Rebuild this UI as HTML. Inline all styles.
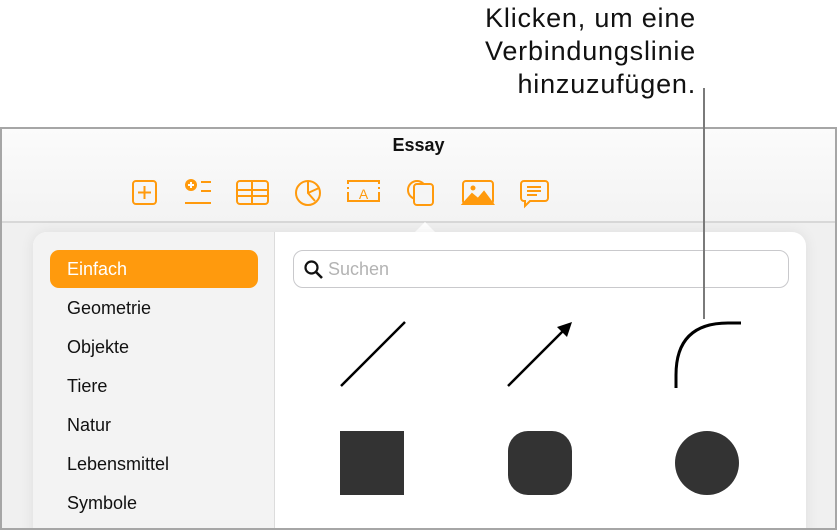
<!DOCTYPE html>
<html><head><meta charset="utf-8">
<style>
*{margin:0;padding:0;box-sizing:border-box}
body{width:838px;height:531px;background:#fff;position:relative;overflow:hidden;font-family:"Liberation Sans",sans-serif}
.call{position:absolute;right:142px;top:2px;text-align:right;font-size:27px;line-height:33px;color:#111;letter-spacing:0.8px}
.win{position:absolute;left:0;top:127px;width:837px;height:403px;border:2px solid #a6a6a6;background:#f0f0f0;overflow:hidden}
.tb{position:absolute;left:0;top:0;right:0;height:94px;background:linear-gradient(#fbfbfb,#f3f3f3);border-bottom:2px solid #d8d8d8}
.title{position:absolute;top:6px;left:0;right:0;text-align:center;font-weight:bold;font-size:18px;color:#111}
.pop{position:absolute;left:31px;top:103px;width:773px;height:320px;background:#fff;border-radius:14px;box-shadow:0 0 14px rgba(0,0,0,0.08)}
.side{position:absolute;left:0;top:0;width:242px;height:100%;background:#f3f3f3;border-radius:14px 0 0 0;border-right:1px solid #dcdcdc}
.item{position:absolute;left:34px;font-size:18px;color:#111}
.sel{position:absolute;left:17px;top:18px;width:208px;height:38px;background:#ff9a0d;border-radius:9px;color:#fff;font-size:18px;padding-left:17px;line-height:39px}
.search{position:absolute;left:260px;top:18px;width:496px;height:38px;border:1px solid #c9c9cc;border-radius:10px;color:#b3b3b3;font-size:18px;line-height:37px;padding-left:34px}
.arrowup{position:absolute;left:412px;top:93px;width:0;height:0;border-left:11px solid transparent;border-right:11px solid transparent;border-bottom:11px solid #fff}
</style></head><body>
<div class="call">Klicken, um eine<br>Verbindungslinie<br>hinzuzufügen.</div>
<div class="win">
 <div class="tb">
  <div class="title">Essay</div>
  <svg style="position:absolute;left:0;top:0" width="837" height="94" fill="none" stroke="#ff9a0d" stroke-width="2">
   <rect x="131" y="52" width="23" height="23" rx="3"/><path d="M142.5 57v13M136 63.5h13"/>
   <circle cx="189" cy="56" r="6" fill="#ff9a0d" stroke="none"/><path d="M186 56h6M189 53v6" stroke="#fff"/><path d="M199 53h10M199 62h10M183 74h26"/>
   <rect x="235" y="52" width="31" height="23" rx="3"/><path d="M235 61h31M235 67h31M250 52v23"/>
   <circle cx="306" cy="64" r="12"/><path d="M306 52v12l7 8M306 64l11-5"/>
   <path d="M346 55v-3h31v3M346 60v-2M377 60v-2M346 63v9h31v-9" /><text x="361.5" y="70" font-size="14" fill="#ff9a0d" stroke="none" text-anchor="middle" font-family="Liberation Sans">A</text>
   <circle cx="415" cy="61" r="9"/><rect x="412" y="55" width="19" height="21" rx="3" fill="#f5f5f5"/>
   <rect x="461" y="52" width="30" height="23" rx="3"/><path d="M461 75l9-10 6 5 6-7 9 12z" fill="#ff9a0d"/><circle cx="471" cy="59" r="2.5" fill="#ff9a0d" stroke="none"/>
   <path d="M522 52h21a3 3 0 0 1 3 3v14a3 3 0 0 1-3 3h-15l-5 5v-5h-1a3 3 0 0 1-3-3v-14a3 3 0 0 1 3-3zM525 58h14M525 62h14M525 66h10"/>
  </svg>
 </div>
 <div class="arrowup"></div>
 <div class="pop">
  <div class="side">
   <div class="sel">Einfach</div>
   <div class="item" style="top:66px">Geometrie</div>
   <div class="item" style="top:105px">Objekte</div>
   <div class="item" style="top:144px">Tiere</div>
   <div class="item" style="top:183px">Natur</div>
   <div class="item" style="top:222px">Lebensmittel</div>
   <div class="item" style="top:261px">Symbole</div>
  </div>
  <div class="search">Suchen</div>
  <svg style="position:absolute;left:270px;top:27px" width="22" height="22" fill="none" stroke="#111" stroke-width="2.2"><circle cx="8.5" cy="8.5" r="6"/><path d="M13 13l6 6" stroke-width="2.6"/></svg>
 </div>
</div>
<svg style="position:absolute;left:0;top:0" width="838" height="531">
 <path d="M704 88V319" stroke="#7a7a7a" stroke-width="2"/>
 <path d="M341 386L405 322" stroke="#000" stroke-width="2.5"/>
 <path d="M508 386L566 328" stroke="#000" stroke-width="2.5"/>
 <path d="M572 322l-15 5 10 10z" fill="#000"/>
 <path d="M676 388V375Q676 323 728 323H741" fill="none" stroke="#000" stroke-width="3"/>
 <rect x="340" y="431" width="64" height="64" fill="#333"/>
 <rect x="508" y="431" width="64" height="64" rx="20" fill="#333"/>
 <circle cx="707" cy="463" r="32" fill="#333"/>
</svg>
</body></html>
